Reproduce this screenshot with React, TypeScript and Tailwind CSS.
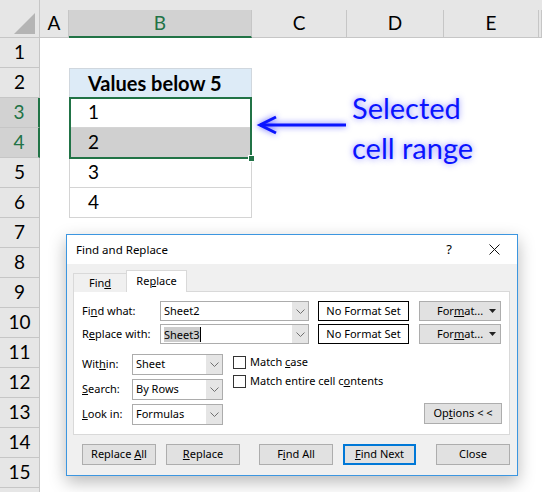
import React from 'react';

const cols = [
  { label: 'A', w: 'w-[29px]', sel: false },
  { label: 'B', w: 'w-[183px]', sel: true },
  { label: 'C', w: 'w-[95px]', sel: false },
  { label: 'D', w: 'w-[97px]', sel: false },
  { label: 'E', w: 'w-[95px]', sel: false },
  { label: '', w: 'flex-1', sel: false },
];

const tableRows: Record<number, { text: string; head?: boolean; grey?: boolean }> = {
  2: { text: 'Values below 5', head: true },
  3: { text: '1' },
  4: { text: '2', grey: true },
  5: { text: '3' },
  6: { text: '4' },
};

function Chevron() {
  return (
    <svg width="9" height="5" viewBox="0 0 9 5">
      <polyline points="0.5,0.5 4.5,4.5 8.5,0.5" fill="none" stroke="#707070" strokeWidth="1" />
    </svg>
  );
}

function Combo({ value, w, h, selected }: { value: string; w: string; h: string; selected?: boolean }) {
  return (
    <div className={`${w} ${h} flex border border-[#acacac] bg-white`}>
      <div className="flex-1 flex items-center pl-[3px]">
        {selected ? (
          <>
            <span className="bg-[#cccccc] leading-[15px]">{value}</span>
            <span className="w-px h-[15px] bg-black" />
          </>
        ) : (
          <span>{value}</span>
        )}
      </div>
      <div className="w-[16px] bg-[#e5e5e5] flex items-center justify-center">
        <Chevron />
      </div>
    </div>
  );
}

function Btn({ children, blue, w = 'w-[74px]' }: { children: React.ReactNode; blue?: boolean; w?: string }) {
  return (
    <div
      className={`${w} h-[21px] flex items-center justify-center bg-[#e1e1e1] ${
        blue ? 'border-2 border-[#0078d7]' : 'border border-[#adadad]'
      }`}
    >
      {children}
    </div>
  );
}

function Check({ children }: { children: React.ReactNode }) {
  return (
    <div className="h-[17px] flex items-center">
      <div className="w-[13px] h-[13px] border border-[#333333] bg-white" />
      <span className="ml-[4px]">{children}</span>
    </div>
  );
}

function FormatBtn() {
  return (
    <div className="w-[82px] h-[20px] flex items-center bg-[#e1e1e1] border border-[#adadad] pl-[17px] pr-[4px]">
      <span>
        For<span className="underline">m</span>at...
      </span>
      <svg className="ml-auto" width="7" height="4" viewBox="0 0 7 4">
        <polygon points="0,0 7,0 3.5,4" fill="#222" />
      </svg>
    </div>
  );
}

export default function App() {
  return (
    <div className="relative w-[542px] h-[492px] overflow-hidden bg-white font-[Lato,'Liberation_Sans',sans-serif] text-black">
      {/* Column headers */}
      <div className="flex h-[38px] bg-[#e6e6e6]">
        <div className="w-[40px] h-[38px] border-r border-b border-[#c6c6c6] flex items-end justify-end pr-[4px] pb-[3px]">
          <svg width="21" height="21" viewBox="0 0 21 21">
            <polygon points="0,21 21,21 21,0" fill="#b4b4b4" />
          </svg>
        </div>
        {cols.map((c) => (
          <div key={c.label} className={`${c.w} flex flex-col`}>
            <div className="h-[10px]" />
            <div
              className={`h-[28px] flex items-center justify-center text-[19px] border-r border-[#c6c6c6] ${
                c.sel ? 'bg-[#d2d2d2] text-[#217346] border-b-2 border-b-[#217346]' : 'border-b'
              }`}
            >
              {c.label}
            </div>
          </div>
        ))}
      </div>

      {/* Rows */}
      {Array.from({ length: 16 }, (_, i) => i + 1).map((r) => {
        const t = tableRows[r];
        const selRow = r === 3 || r === 4;
        return (
          <div key={r} className="flex h-[30px]">
            <div
              className={`w-[40px] flex items-center justify-center text-[19px] border-b border-[#c6c6c6] ${
                selRow
                  ? 'bg-[#d2d2d2] text-[#217346] border-r-2 border-r-[#217346]'
                  : 'bg-[#e6e6e6] border-r'
              }`}
            >
              {r < 16 ? r : ''}
            </div>
            <div className="w-[29px]" />
            {t ? (
              <div
                className={`w-[183px] flex items-center pl-[18px] text-[19px] border-l border-r border-b ${
                  t.head ? 'border-t bg-[#ddebf7] font-bold text-[20px] border-[#d0d7de]' : 'border-[#d4d4d4]'
                } ${t.grey ? 'bg-[#d0d0d0]' : ''}`}
              >
                {t.text}
              </div>
            ) : (
              <div className="w-[183px]" />
            )}
            <div className="flex-1" />
          </div>
        );
      })}

      {/* Selection outline */}
      <div className="absolute left-[69px] top-[97px] w-[183px] h-[62px] border-2 border-[#217346]" />
      <div className="absolute left-[248px] top-[155px] w-[7px] h-[7px] bg-[#217346] border border-white" />

      {/* Annotation */}
      <svg
        className="absolute left-[256px] top-[115px] drop-shadow-[0_0_3px_rgba(30,30,255,0.7)]"
        width="92"
        height="20"
        viewBox="0 0 92 20"
      >
        <line x1="4" y1="10" x2="90" y2="10" stroke="#0a14ff" strokeWidth="3" />
        <polyline points="20,2 4,10 20,18" fill="none" stroke="#0a14ff" strokeWidth="3" />
      </svg>
      <div className="absolute left-[352px] top-[88px] text-[29px] leading-[40px] text-[#0a14ff] [text-shadow:0_0_6px_rgba(40,40,255,0.55)]">
        <div>Selected</div>
        <div>cell range</div>
      </div>

      {/* Find and Replace dialog */}
      <div className="absolute left-[66px] top-[234px] w-[452px] h-[242px] border border-[#3c96e0] bg-[#f0f0f0] shadow-[0_6px_16px_rgba(0,0,0,0.28)] flex flex-col text-[11px] font-['Noto_Sans',Lato,sans-serif]">
        <div className="h-[29px] bg-white flex items-center pl-[9px] text-[11.5px]">
          <span>Find and Replace</span>
          <span className="ml-auto w-[46px] text-center text-[13px]">?</span>
          <div className="w-[45px] flex items-center justify-center">
            <svg width="11" height="11" viewBox="0 0 11 11">
              <path d="M0.5 0.5 L10.5 10.5 M10.5 0.5 L0.5 10.5" stroke="#111" strokeWidth="1" />
            </svg>
          </div>
        </div>

        <div className="flex-1 flex flex-col pl-[6px] pr-[7px] pt-[7px]">
          {/* Tabs */}
          <div className="flex items-end h-[21px] -mb-px relative z-10">
            <div className="w-[53px] h-[19px] flex items-center justify-center border-t border-l border-[#d9d9d9] bg-[#f0f0f0]">
              <span>
                Fin<span className="underline">d</span>
              </span>
            </div>
            <div className="w-[61px] h-[22px] flex items-center justify-center border-t border-l border-r border-[#d9d9d9] bg-white">
              <span>
                Re<span className="underline">p</span>lace
              </span>
            </div>
          </div>

          {/* Panel */}
          <div className="h-[144px] border border-[#d9d9d9] bg-white pl-[8px] pr-[7px] pt-[9px] flex flex-col">
            <div className="flex items-center h-[20px]">
              <span className="w-[78px]">
                Fi<span className="underline">n</span>d what:
              </span>
              <Combo value="Sheet2" w="w-[149px]" h="h-[20px]" />
              <div className="ml-[9px] w-[91px] h-[20px] border border-black flex items-center justify-center">
                No Format Set
              </div>
              <div className="ml-[10px]">
                <FormatBtn />
              </div>
            </div>
            <div className="flex items-center h-[20px] mt-[3px]">
              <span className="w-[78px]">
                R<span className="underline">e</span>place with:
              </span>
              <Combo value="Sheet3" w="w-[149px]" h="h-[20px]" selected />
              <div className="ml-[9px] w-[91px] h-[20px] border border-black flex items-center justify-center">
                No Format Set
              </div>
              <div className="ml-[10px]">
                <FormatBtn />
              </div>
            </div>

            <div className="flex mt-[10px]">
              <div className="flex flex-col gap-[4px]">
                <div className="flex items-center">
                  <span className="w-[50px]">
                    Wit<span className="underline">h</span>in:
                  </span>
                  <Combo value="Sheet" w="w-[91px]" h="h-[21px]" />
                </div>
                <div className="flex items-center">
                  <span className="w-[50px]">
                    <span className="underline">S</span>earch:
                  </span>
                  <Combo value="By Rows" w="w-[91px]" h="h-[21px]" />
                </div>
                <div className="flex items-center">
                  <span className="w-[50px]">
                    <span className="underline">L</span>ook in:
                  </span>
                  <Combo value="Formulas" w="w-[91px]" h="h-[21px]" />
                </div>
              </div>
              <div className="flex-1 flex flex-col ml-[10px]">
                <Check>
                  Match <span className="underline">c</span>ase
                </Check>
                <div className="mt-[2px]">
                  <Check>
                    Match entire cell c<span className="underline">o</span>ntents
                  </Check>
                </div>
                <div className="mt-auto self-end mb-[1px]">
                  <Btn w="w-[78px]">
                    <span>
                      Op<span className="underline">t</span>ions &lt; &lt;
                    </span>
                  </Btn>
                </div>
              </div>
            </div>
          </div>

          {/* Bottom buttons */}
          <div className="flex mt-[9px] ml-[9px]">
            <Btn>
              <span>
                Replace <span className="underline">A</span>ll
              </span>
            </Btn>
            <div className="ml-[10px]">
              <Btn>
                <span>
                  <span className="underline">R</span>eplace
                </span>
              </Btn>
            </div>
            <div className="ml-[19px]">
              <Btn>
                <span>
                  F<span className="underline">i</span>nd All
                </span>
              </Btn>
            </div>
            <div className="ml-[10px]">
              <Btn blue w="w-[73px]">
                <span>
                  <span className="underline">F</span>ind Next
                </span>
              </Btn>
            </div>
            <div className="ml-[20px]">
              <Btn>
                <span>Close</span>
              </Btn>
            </div>
          </div>
        </div>
      </div>
    </div>
  );
}
